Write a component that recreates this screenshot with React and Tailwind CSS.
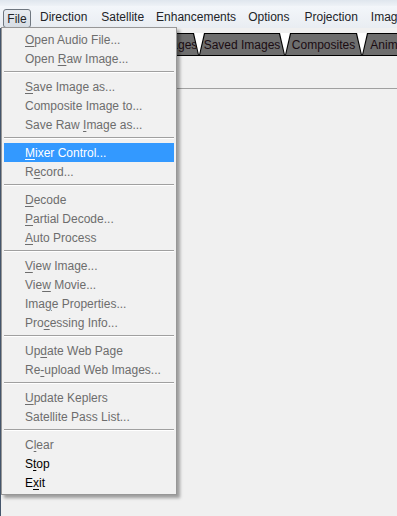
import React from "react";

const F = { fontFamily: '"Liberation Sans", Arial, sans-serif' };

function Label({ text, u }) {
  if (u === undefined || u < 0) return <span>{text}</span>;
  return (
    <span>
      {text.slice(0, u)}
      <span className="underline underline-offset-2 decoration-1">{text[u]}</span>
      {text.slice(u + 1)}
    </span>
  );
}

const items = [
  ["Open Audio File...", 0, 0],
  ["Open Raw Image...", 5, 0],
  "sep",
  ["Save Image as...", 0, 0],
  ["Composite Image to...", -1, 0],
  ["Save Raw Image as...", 9, 0],
  "sep",
  ["Mixer Control...", 0, 2],
  ["Record...", 1, 0],
  "sep",
  ["Decode", 0, 0],
  ["Partial Decode...", 0, 0],
  ["Auto Process", 0, 0],
  "sep",
  ["View Image...", 0, 0],
  ["View Movie...", 3, 0],
  ["Image Properties...", 3, 0],
  ["Processing Info...", 3, 0],
  "sep",
  ["Update Web Page", 2, 0],
  ["Re-upload Web Images...", 2, 0],
  "sep",
  ["Update Keplers", 0, 0],
  ["Satellite Pass List...", -1, 0],
  "sep",
  ["Clear", 1, 0],
  ["Stop", 1, 1],
  ["Exit", 1, 1],
];

function Tab({ w, label }) {
  return (
    <div
      className="relative h-[22px] shrink-0 bg-black"
      style={{ width: w, clipPath: "polygon(5px 0, calc(100% - 5px) 0, 100% 100%, 0 100%)" }}
    >
      <div
        className="absolute left-[1px] right-[1px] top-[1px] bottom-0 bg-[#6e6e6e] flex items-center justify-center text-[12px] text-[#1a0c12] pt-[1px]"
        style={{ clipPath: "polygon(5px 0, calc(100% - 5px) 0, 100% 100%, 0 100%)" }}
      >
        {label}
      </div>
    </div>
  );
}

export default function App() {
  return (
    <div className="relative w-[397px] h-[516px] overflow-hidden bg-[#f0f0f0]" style={F}>
      {/* title strip */}
      <div className="h-[6px] bg-gradient-to-b from-[#dfe6ee] to-[#eef2f7]" />
      {/* menu bar */}
      <div className="h-[22px] flex items-center text-[12px] text-[#222428] bg-gradient-to-b from-[#f3f6fa] to-[#e9edf2] whitespace-nowrap">
        <div className="shrink-0 ml-[3px] mt-[3px] h-[19px] w-[28px] rounded-[3px] border border-[#6f7780] bg-gradient-to-b from-[#e8ecf1] to-[#d7dde4] flex items-center justify-center">
          File
        </div>
        <span className="shrink-0 ml-[9px]">Direction</span>
        <span className="shrink-0 ml-[14px]">Satellite</span>
        <span className="shrink-0 ml-[12px]">Enhancements</span>
        <span className="shrink-0 ml-[12px]">Options</span>
        <span className="shrink-0 ml-[15px]">Projection</span>
        <span className="shrink-0 ml-[13px]">Images</span>
      </div>
      {/* body */}
      <div className="relative h-[488px] border-l border-[#45566c]">
        <div className="h-[5px]" />
        <div className="flex h-[22px] bg-white whitespace-nowrap">
          <div className="w-[128px] shrink-0" />
          <Tab w={70} label="Raw Images" />
          <Tab w={86} label="Saved Images" />
          <Tab w={77} label="Composites" />
          <Tab w={70} label="Animation" />
        </div>
        <div className="h-px bg-black" />
        <div className="h-[32px]" />
        <div className="h-px bg-[#a0a0a0]" />
      </div>

      {/* dropdown menu */}
      <div className="absolute left-[1px] top-[27px] w-[176px] border border-[#979797] bg-[#f1f1f1] p-[2px] shadow-[3px_3px_3px_rgba(0,0,0,0.35)] text-[12px]">
        {items.map((it, i) =>
          it === "sep" ? (
            <div key={i} className="h-[9px] pt-[3px]">
              <div className="h-px bg-[#a0a0a0]" />
              <div className="h-px bg-white" />
            </div>
          ) : (
            <div
              key={i}
              className={
                "h-[19px] flex items-center pl-[21px] whitespace-nowrap " +
                (it[2] === 2
                  ? "bg-[#3399ff] text-white"
                  : it[2] === 1
                  ? "text-black"
                  : "text-[#6d6d6d]")
              }
            >
              <Label text={it[0]} u={it[1]} />
            </div>
          )
        )}
      </div>
    </div>
  );
}
